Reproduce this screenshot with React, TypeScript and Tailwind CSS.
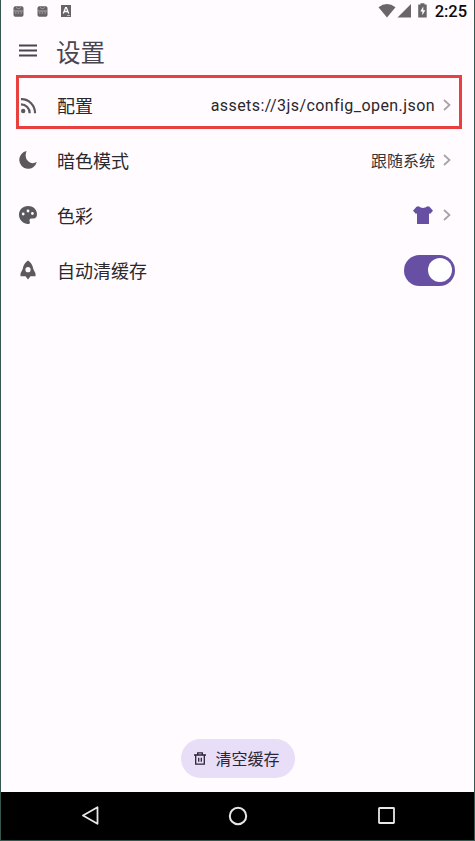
import type { ReactNode } from 'react';

const font = "font-[Roboto,'Noto_Sans_CJK_SC',sans-serif]";

function Chevron() {
  return (
    <svg className="h-3 w-2 shrink-0" viewBox="0 0 8 12" fill="none" stroke="#a5a2a7" strokeWidth="1.7">
      <path d="M1 1l5.5 5L1 11" />
    </svg>
  );
}

function Row({ icon, label, children, marked = false }: { icon: ReactNode; label: string; children: ReactNode; marked?: boolean }) {
  return (
    <div className="relative flex h-[55px] items-center pl-[17px] pr-[23px] pt-px">
      <span className="flex size-5 shrink-0 items-center justify-center text-[#5b595d]">{icon}</span>
      <span className="ml-[19px] mt-[3px] text-[18px] leading-6 text-[#29282c]">{label}</span>
      <div className="ml-auto flex items-center gap-2">{children}</div>
      {marked && <div className="absolute -top-0.5 bottom-[3px] left-[15px] right-3 border-[3px] border-[#e8403f]" />}
    </div>
  );
}

function AppBadge() {
  return (
    <svg className="h-[11px] w-[11px]" viewBox="0 0 11 11">
      <rect x="0.5" y="0.3" width="10" height="10.4" rx="1.8" fill="#666468" />
      <path d="M3 1.300l1.600 1.200h1.800l1.600-1.200" fill="none" stroke="#aaa7ab" strokeWidth=".8" />
      <path d="M0 5h11" stroke="#b5b2b6" strokeWidth=".9" />
      <path d="M2 7h1.500M4.600 7h1.500M7.400 7h1.500" stroke="#b5b2b6" strokeWidth="1" />
    </svg>
  );
}

export default function App() {
  return (
    <div className={`flex h-[841px] w-[475px] flex-col border-x border-b border-[#36574f] bg-[#fffbff] ${font}`}>
      <header className="flex h-[22px] shrink-0 items-center pl-3 pr-[7px]">
        <AppBadge />
        <span className="w-[13px]" />
        <AppBadge />
        <svg className="ml-3 h-3 w-3" viewBox="0 0 12 12">
          <path d="M1 0h10v12H1z" fill="#666468" />
          <path d="M3.300 8.500L5.600 2.600h.8L8.700 8.500M4.300 6.500h3.400" fill="none" stroke="#fff" strokeWidth="1.300" />
          <path d="M7 10.500h3" stroke="#bbb" strokeWidth="1" />
        </svg>
        <svg className="mb-px ml-auto h-[15px] w-[54px]" viewBox="0 0 54 15" fill="#69666b">
          <path d="M1.500 4.300Q10-2.300 18.500 4.300L10 14.500z" />
          <path d="M34 1v13.500H20.500z" />
          <path d="M43.500 1.500V.3h4v1.200h2.200V14.500h-8.500V1.500z" />
          <path d="M46.300 3.500l-3 5h2v3.700l3-5h-2z" fill="#fff" />
        </svg>
        <span className="ml-1 mt-0.5 text-[16.500px] font-medium leading-[22px] tracking-[-0.050px] text-[#0b0b0b]">2:25</span>
      </header>

      <div className="flex h-[55px] shrink-0 items-center pl-[18px]">
        <svg className="mt-px h-[13px] w-[18px]" viewBox="0 0 18 13" stroke="#49454f" strokeWidth="2">
          <path d="M0 1.500h18M0 6.500h18M0 11.500h18" />
        </svg>
        <h1 className="ml-[19px] mt-2 text-[24.500px] font-normal leading-8 text-[#49454f]">设置</h1>
      </div>

      <main className="flex min-h-0 flex-1 flex-col">
        <Row
          marked
          label="配置"
          icon={
            <svg className="size-[17px]" viewBox="0 0 17 17" fill="none" stroke="currentColor" strokeWidth="2.200">
              <path d="M1 2.200A13.600 13.600 0 0 1 15 16.300M1 7.300A8.700 8.700 0 0 1 9.700 16.300" />
              <circle cx="3.200" cy="14" r="2.200" fill="currentColor" stroke="none" />
            </svg>
          }
        >
          <span className="mt-0.5 text-[16px] leading-6 tracking-[0.43px] text-[#29272b]">assets://3js/config_open.json</span>
          <Chevron />
        </Row>
        <Row
          label="暗色模式"
          icon={
            <svg className="size-[18px]" viewBox="0 0 18 18" fill="currentColor">
              <path d="M7.600.1A8.900 8.900 0 1 0 17.800 11.100Q13 13.600 9.200 10.300Q5 6.300 7.600.1z" />
            </svg>
          }
        >
          <span className="mt-1 text-[16px] leading-6 text-[#343236]">跟随系统</span>
          <Chevron />
        </Row>
        <Row
          label="色彩"
          icon={
            <svg className="size-[18px]" viewBox="0 0 18 18" fill="currentColor">
              <path d="M9 0C3.800 0 0 3.800 0 8.800C0 14 4.500 18 9 18C10.800 18 11.300 16.700 10.700 15.400C10 13.800 11 12.500 12.500 12.500H14.500C16.800 12.500 18 10.700 18 8.300C18 3.500 14 0 9 0z" />
              <g fill="#fffbff">
                <circle cx="4.200" cy="8" r="1.400" />
                <circle cx="9" cy="5" r="1.400" />
                <circle cx="13.400" cy="7.500" r="1.400" />
              </g>
            </svg>
          }
        >
          <svg className="mr-0.5 h-[18px] w-5" viewBox="0 0 20 18" fill="#6750a4">
            <path d="M5.500 0.300Q10 3.800 14.500 .3L16.500 .8L20 4.700L17 8L16 7.300V18H4V7.300L3 8L0 4.700L3.500 .8z" />
          </svg>
          <Chevron />
        </Row>
        <Row
          label="自动清缓存"
          icon={
            <svg className="h-5 w-4" viewBox="0 0 16 20" fill="currentColor">
              <path fillRule="evenodd" d="M8 .5C10.800 2.300 12.700 5 13.300 9L15.500 13.500V16.300H10.500L8 19.500L5.500 16.300H.5V13.500L2.700 9C3.300 5 5.200 2.300 8 .5zM8 7.100a2.600 2.600 0 1 0 0 5.200a2.600 2.600 0 0 0 0-5.200z" />
            </svg>
          }
        >
          <button aria-label="自动清缓存" className="-mr-1 flex h-[31px] w-[51px] items-center justify-end rounded-full bg-[#6750a4] pr-[3px]">
            <span className="size-6 rounded-full bg-white" />
          </button>
        </Row>
      </main>

      <div className="flex shrink-0 justify-center pb-3.5">
        <button className="flex h-[39px] w-[114px] items-center rounded-full bg-[#e8def8] pl-[13px] text-[#2a2638]">
          <svg className="h-[13px] w-3" viewBox="0 0 12 13" fill="none" stroke="currentColor" strokeWidth="1.300">
            <path d="M0 3h12M3.700 3V.8h4.600V3M1.700 3v9.200h8.600V3M4.700 5.700v4M7.300 5.700v4" />
          </svg>
          <span className="ml-2.5 mt-0.5 text-[16px] leading-6">清空缓存</span>
        </button>
      </div>

      <nav className="flex h-12 shrink-0 items-center justify-between bg-black pb-px pl-[81px] pr-[79px]">
        <svg className="h-[19px] w-[17px]" viewBox="0 0 17 19" fill="none" stroke="#e7e7e7" strokeWidth="1.800" strokeLinejoin="round">
          <path d="M1 9.500L15.500 1.200V17.800z" />
        </svg>
        <svg className="-ml-0.5 size-5" viewBox="0 0 20 20" fill="none" stroke="#e7e7e7" strokeWidth="2">
          <circle cx="10" cy="10" r="8.200" />
        </svg>
        <svg className="size-[17px]" viewBox="0 0 17 17" fill="none" stroke="#e7e7e7" strokeWidth="1.800">
          <rect x="1" y="1" width="15" height="15" rx=".5" />
        </svg>
      </nav>
    </div>
  );
}
